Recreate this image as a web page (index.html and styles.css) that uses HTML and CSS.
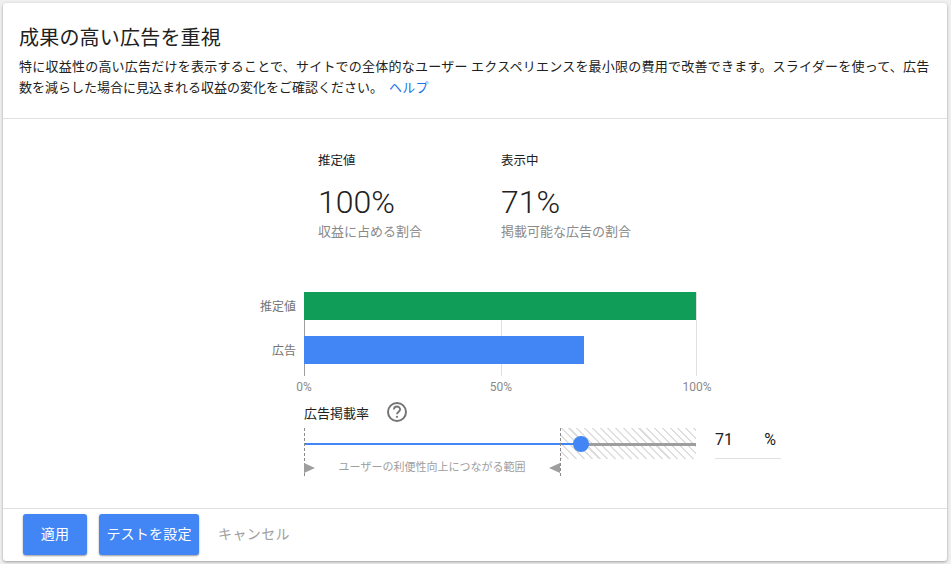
FILE: index.html
```html
<!DOCTYPE html>
<html lang="ja">
<head>
    <meta charset="UTF-8">
    <title>成果の高い広告を重視</title>
    <link rel="stylesheet" href="styles.css">
</head>
<body>
    <div class="card">
        <div class="card-header">
            <h2>成果の高い広告を重視</h2>
            <p>特に収益性の高い広告だけを表示することで、サイトでの全体的なユーザー エクスペリエンスを最小限の費用で改善できます。スライダーを使って、広告<span class="tight">数を減らした場合に見込まれる収益の変化をご確認ください。</span><a href="#">ヘルプ</a></p>
        </div>
        <div class="card-body">
            <div class="stats">
                <div class="stat">
                    <div class="stat-title">推定値</div>
                    <div class="stat-value">100%</div>
                    <div class="stat-note">収益に占める割合</div>
                </div>
                <div class="stat">
                    <div class="stat-title">表示中</div>
                    <div class="stat-value">71%</div>
                    <div class="stat-note">掲載可能な広告の割合</div>
                </div>
            </div>
            <div class="chart">
                <div class="chart-labels">
                    <span>推定値</span>
                    <span>広告</span>
                </div>
                <div class="plot">
                    <div class="grid-line start"></div>
                    <div class="grid-line mid"></div>
                    <div class="grid-line end"></div>
                    <div class="bar green" style="width: 100%"></div>
                    <div class="bar blue" style="width: 71.4%"></div>
                </div>
            </div>
            <div class="axis">
                <span class="tick start">0%</span>
                <span class="tick mid">50%</span>
                <span class="tick end">100%</span>
            </div>
            <div class="slider-title">
                <span>広告掲載率</span>
                <svg class="help-icon" width="22" height="22" viewBox="0 0 22 22">
                    <circle cx="11" cy="11" r="9" fill="none" stroke="#757575" stroke-width="2"/>
                    <path d="M7.9 8.6a3.1 3.1 0 0 1 6.2 0c0 2-3.1 2.3-3.1 4.6" fill="none" stroke="#757575" stroke-width="1.8"/>
                    <circle cx="11" cy="15.8" r="1.1" fill="#757575"/>
                </svg>
            </div>
            <div class="slider-row">
                <div class="slider">
                    <div class="hatch"></div>
                    <div class="track-on" style="width: 71%"></div>
                    <div class="track-off" style="width: 29%"></div>
                    <div class="thumb"></div>
                    <div class="guide left"></div>
                    <div class="guide right"></div>
                    <div class="range-label">
                        <span class="arrow-right"></span>
                        <span>ユーザーの利便性向上につながる範囲</span>
                        <span class="arrow-left"></span>
                    </div>
                </div>
                <div class="percent-input">
                    <span>71</span>
                    <span>%</span>
                </div>
            </div>
        </div>
        <div class="card-footer">
            <button class="btn primary">適用</button>
            <button class="btn primary wide">テストを設定</button>
            <button class="btn flat">キャンセル</button>
        </div>
    </div>
</body>
</html>
```

FILE: styles.css
```css
html, body {
    height: 100%;
}
body {
    margin: 0;
    box-sizing: border-box;
    padding: 3px 4px 3px 3px;
    font-family: Roboto, "Noto Sans CJK JP", sans-serif;
    background-color: #f0f0f0;
    color: #212121;
}
.card {
    height: 558px;
    display: flex;
    flex-direction: column;
    background: #fff;
    border-radius: 3px;
    box-shadow: 0 1px 3px rgba(0, 0, 0, 0.35);
}
.card-header {
    height: 116px;
    box-sizing: border-box;
    padding: 23px 16px 0;
    border-bottom: 1px solid #e0e0e0;
}
.card-header h2 {
    margin: 0;
    font-size: 20px;
    font-weight: 400;
    line-height: 24px;
    letter-spacing: 0.2px;
}
.card-header p {
    margin: 6px 0 0;
    font-size: 13px;
    line-height: 21px;
    letter-spacing: 0.23px;
}
.card-header .tight {
    letter-spacing: 0;
}
.card-header a {
    color: #1a73e8;
    text-decoration: none;
    margin-left: 6px;
}
.card-body {
    flex: 1;
    padding-left: 301px;
}
.stats {
    display: flex;
    padding: 33px 0 0 14px;
}
.stat {
    width: 183px;
}
.stat-title {
    font-size: 12.5px;
    line-height: 18px;
}
.stat-value {
    margin-top: 13px;
    font-size: 32px;
    font-weight: 300;
    line-height: 38px;
}
.stat-note {
    margin-top: 2px;
    font-size: 13px;
    line-height: 18px;
    color: #8a8a8a;
}
.chart {
    display: flex;
    margin-top: 51px;
    margin-left: -60px;
}
.chart-labels {
    width: 52px;
    padding-right: 8px;
    display: flex;
    flex-direction: column;
    gap: 24px;
    text-align: right;
    font-size: 12px;
    line-height: 20px;
    padding-top: 5px;
    color: #757575;
}
.plot {
    position: relative;
    width: 392px;
    height: 84px;
    display: flex;
    flex-direction: column;
    gap: 16px;
}
.grid-line {
    position: absolute;
    top: 0;
    bottom: 0;
    width: 1px;
    background: #e0e0e0;
}
.grid-line.start {
    left: 0;
    background: #9e9e9e;
}
.grid-line.mid {
    left: 197px;
}
.grid-line.end {
    left: 392px;
}
.bar {
    position: relative;
    height: 28px;
    flex: none;
}
.bar.green {
    background: #0f9d58;
}
.bar.blue {
    background: #4285f4;
}
.axis {
    position: relative;
    height: 20px;
    width: 392px;
    font-size: 12px;
    line-height: 20px;
    color: #8a8a8a;
}
.tick {
    position: absolute;
    top: 1px;
    transform: translateX(-50%);
}
.tick.start {
    left: 0;
}
.tick.mid {
    left: 197px;
}
.tick.end {
    left: 393px;
}
.slider-title {
    display: flex;
    align-items: center;
    gap: 17px;
    height: 24px;
    margin-top: 4px;
    font-size: 13px;
}
.slider-row {
    display: flex;
    gap: 19px;
    margin-top: 4px;
}
.slider {
    position: relative;
    width: 392px;
    height: 48px;
}
.hatch {
    position: absolute;
    left: 256px;
    right: 0;
    top: 0;
    height: 31px;
    background: repeating-linear-gradient(45deg, #dedede 0, #dedede 1.5px, #fff 1.5px, #fff 5.5px);
}
.track-on, .track-off {
    position: absolute;
    top: 15px;
}
.track-on {
    left: 0;
    height: 2px;
    background: #4285f4;
}
.track-off {
    right: 0;
    height: 3px;
    background: #9e9e9e;
}
.thumb {
    position: absolute;
    left: 269px;
    top: 8px;
    width: 16px;
    height: 16px;
    border-radius: 50%;
    background: #4285f4;
}
.guide {
    position: absolute;
    top: 0;
    height: 48px;
    border-left: 1px dashed #8a8a8a;
}
.guide.left {
    left: 0;
}
.guide.right {
    left: 256px;
}
.range-label {
    position: absolute;
    left: 0;
    top: 33px;
    width: 256px;
    display: flex;
    justify-content: space-between;
    align-items: center;
    font-size: 11px;
    line-height: 14px;
    color: #9e9e9e;
}
.arrow-right {
    border-left: 11px solid #9e9e9e;
    border-top: 5px solid transparent;
    border-bottom: 5px solid transparent;
}
.arrow-left {
    border-right: 11px solid #9e9e9e;
    border-top: 5px solid transparent;
    border-bottom: 5px solid transparent;
}
.percent-input {
    width: 66px;
    height: 31px;
    box-sizing: border-box;
    display: flex;
    justify-content: space-between;
    padding-right: 5px;
    border-bottom: 1px solid #e0e0e0;
    font-size: 16px;
    line-height: 24px;
}
.card-footer {
    height: 53px;
    box-sizing: border-box;
    display: flex;
    gap: 12px;
    padding: 5px 20px 0;
    border-top: 1px solid #e0e0e0;
}
.btn {
    height: 41px;
    border: none;
    border-radius: 3px;
    font-family: inherit;
    font-size: 14px;
    padding: 0 0 4px;
    letter-spacing: 0.2px;
}
.btn.primary {
    width: 64px;
    color: #fff;
    background-color: #4285f4;
    box-shadow: 0 1px 2px rgba(0, 0, 0, 0.4);
}
.btn.wide {
    width: 100px;
}
.btn.flat {
    margin-left: 7px;
    color: #a0a0a0;
    background: none;
    letter-spacing: 0.4px;
}
```
